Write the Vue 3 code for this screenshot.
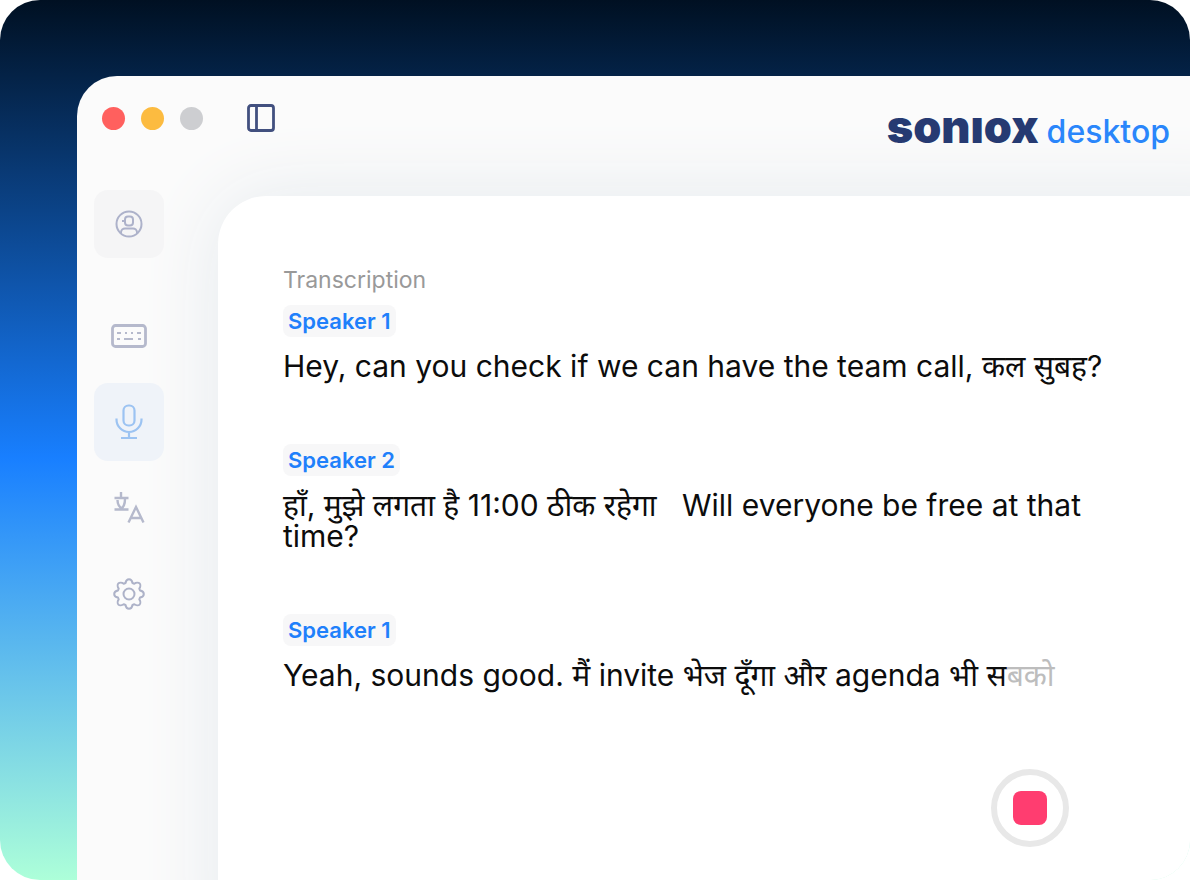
<script setup>
import { ref } from "vue";

const active = ref("mic");

const navItems = [
  { id: "keyboard", label: "Keyboard" },
  { id: "mic", label: "Transcribe" },
  { id: "translate", label: "Translate" },
  { id: "settings", label: "Settings" },
];

const segments = [
  {
    speaker: "Speaker 1",
    text: "Hey, can you check if we can have the team call, कल सुबह?",
  },
  {
    speaker: "Speaker 2",
    text: "हाँ, मुझे लगता है 11:00 ठीक रहेगा \u00a0 Will everyone be free at that time?",
  },
  {
    speaker: "Speaker 1",
    text: "Yeah, sounds good. मैं invite भेज दूँगा और agenda भी स",
    pending: "बको",
  },
];
</script>

<template>
  <div class="scene">
    <div class="window">
      <header class="titlebar">
        <div class="controls">
          <span class="dot red"></span>
          <span class="dot yellow"></span>
          <span class="dot gray"></span>
          <button class="toggle" aria-label="Toggle sidebar">
            <svg width="28" height="28" viewBox="0 0 28 28" fill="none" stroke="#42507f" stroke-width="2.8">
              <rect x="1.5" y="1.5" width="25" height="25" rx="2.5" />
              <path d="M9.5 1.5v25" />
            </svg>
          </button>
        </div>
        <div class="brand">
          <span class="brand-name">sonıox</span>
          <span class="brand-product">desktop</span>
        </div>
      </header>

      <nav class="sidebar">
        <button class="nav-btn profile" aria-label="Account">
          <svg width="28" height="28" viewBox="0 0 28 28" fill="none" stroke="#adb2ca" stroke-width="2">
            <circle cx="14" cy="14" r="12.5" />
            <rect x="10" y="6.5" width="8" height="9" rx="3" />
            <path d="M7 11h3M6 23.5v-1c0-2.5 2-4 4-4h8c2 0 4 1.5 4 4v1" />
          </svg>
        </button>
        <button
          v-for="item in navItems"
          :key="item.id"
          class="nav-btn"
          :class="{ active: active === item.id }"
          :aria-label="item.label"
          @click="active = item.id"
        >
          <svg v-if="item.id === 'keyboard'" width="36" height="24" viewBox="0 0 36 24" fill="none" stroke="#b5b9cc">
            <rect x="1.5" y="1.5" width="33" height="21" rx="3" stroke-width="2.8" />
            <path d="M6 9h4M14 9h2M20 9h2M26 9h4M6 15h3M13 15h9M27 15h3" stroke-width="2" />
          </svg>
          <svg v-else-if="item.id === 'mic'" width="28" height="36" viewBox="0 0 28 36" fill="none" stroke="#9cc3f2" stroke-width="2.2">
            <rect x="8.5" y="1.5" width="11" height="20" rx="5" />
            <path d="M1.5 14.5v1a12.5 12.5 0 0 0 25 0v-1M14 28v6M6 34h16" />
          </svg>
          <svg v-else-if="item.id === 'translate'" width="32" height="32" viewBox="0 0 32 32" fill="none" stroke="#b5b9cc" stroke-width="2.4">
            <path d="M8 0v5M1.5 6h14M4.5 8c0 4 1.5 7 5 9M12 7c0 5-2 9-5 10.5M1.5 17.5h14" />
            <path d="M15.500 30.500l7.500-15.500 7.500 15.500M18 26h10" />
          </svg>
          <svg v-else width="32" height="32" viewBox="0 0 32 32" fill="none" stroke="#adb2c8" stroke-width="2" stroke-linejoin="round">
            <path d="M12.500 5C13 2 14.500 1.200 16 1.200S19 2 19.500 5L21.300 5.700C23 4.500 25.500 4.300 26.600 5.400S27.500 9 26.300 10.700L27 12.500C30 13 30.800 14.500 30.800 16S30 19 27 19.500L26.300 21.300C27.500 23 27.700 25.500 26.600 26.600S23 27.500 21.300 26.300L19.500 27C19 30 17.500 30.800 16 30.800S13 30 12.500 27L10.700 26.300C9 27.500 6.500 27.700 5.400 26.600S4.500 23 5.700 21.300L5 19.500C2 19 1.200 17.500 1.200 16S2 13 5 12.500L5.700 10.700C4.500 9 4.300 6.500 5.400 5.400S9 4.500 10.700 5.700Z" />
            <circle cx="16" cy="16" r="5.5" />
          </svg>
        </button>
      </nav>

      <main class="panel">
        <h1 class="heading">Transcription</h1>
        <section v-for="(seg, i) in segments" :key="i" class="segment">
          <span class="speaker">{{ seg.speaker }}</span>
          <p class="line">{{ seg.text }}<span v-if="seg.pending" class="pending">{{ seg.pending }}</span></p>
        </section>
        <button class="stop" aria-label="Stop recording">
          <span class="stop-icon"></span>
        </button>
      </main>
    </div>
  </div>
</template>

<style>
body {
  background: #fff;
}
</style>

<style scoped>
.scene,
.scene * {
  box-sizing: border-box;
}

.scene {
  display: flex;
  min-height: 100vh;
  padding: 76px 0 0 77px;
  border-radius: 40px;
  overflow: hidden;
  background: linear-gradient(180deg, #001022 0%, #187fff 52%, #adffd9 100%);
  font-family: Inter, "Noto Sans", "Noto Sans Devanagari", sans-serif;
}

.window {
  flex: 1;
  display: grid;
  grid-template-columns: 141px 1fr;
  grid-template-rows: 120px 1fr;
  border-top-left-radius: 40px;
  overflow: hidden;
  background: #fbfbfb;
}

.titlebar {
  grid-column: 1 / -1;
  z-index: 1;
  display: flex;
  justify-content: space-between;
  align-items: flex-start;
  padding: 28px 20px 0 25px;
}

.controls {
  display: flex;
  align-items: center;
  gap: 16px;
}

.dot {
  width: 23px;
  height: 23px;
  border-radius: 50%;
}
.dot.red {
  background: #ff605e;
}
.dot.yellow {
  background: #fcbb40;
}
.dot.gray {
  background: #cdced1;
}

button {
  border: none;
  padding: 0;
  background: none;
  cursor: pointer;
}

.toggle {
  display: flex;
  margin-left: 28px;
}

.brand {
  display: flex;
  align-items: baseline;
  gap: 8px;
  line-height: 46px;
}

.brand-name {
  font-size: 45px;
  font-weight: 900;
  color: #263a72;
}

.brand-product {
  font-size: 32px;
  font-weight: 500;
  color: #2a86fb;
}

.sidebar {
  z-index: 1;
  display: flex;
  flex-direction: column;
  align-items: flex-start;
  gap: 8px;
  padding-left: 17px;
}

.nav-btn {
  display: flex;
  align-items: center;
  justify-content: center;
  width: 70px;
  height: 78px;
  border-radius: 14px;
}
.nav-btn.profile {
  height: 68px;
  margin: -6px 0 31px;
  background: #f5f5f6;
}
.nav-btn.active {
  background: #eff3f9;
}

/* runs past the right and bottom edges so its shadow stays even there */
.panel {
  display: flex;
  flex-direction: column;
  margin: 0 -80px -80px 0;
  padding: 68px 140px 113px 65px;
  border-top-left-radius: 48px;
  background: #fff;
  box-shadow: 0 0 80px 0 #e5eaee;
}

.heading {
  margin: 0 0 9px;
  font-size: 23px;
  line-height: 32px;
  font-weight: 400;
  color: #999;
}

.segment {
  margin-bottom: 62px;
}

.speaker {
  display: block;
  width: fit-content;
  padding: 0 5px;
  border-radius: 8px;
  background: #f7f7f8;
  font-size: 22px;
  line-height: 32px;
  font-weight: 600;
  color: #1f80fb;
}

.line {
  margin: 14px 0 0;
  font-size: 30px;
  line-height: 31px;
  color: #0c0c0c;
}

.pending {
  color: #bdbdbd;
}

.stop {
  display: flex;
  align-items: center;
  justify-content: center;
  align-self: flex-end;
  width: 78px;
  height: 78px;
  margin: auto 61px 0 0;
  border: 6px solid #e8e8e8;
  border-radius: 50%;
}

.stop-icon {
  width: 34px;
  height: 34px;
  border-radius: 8px;
  background: #ff3d70;
}
</style>
